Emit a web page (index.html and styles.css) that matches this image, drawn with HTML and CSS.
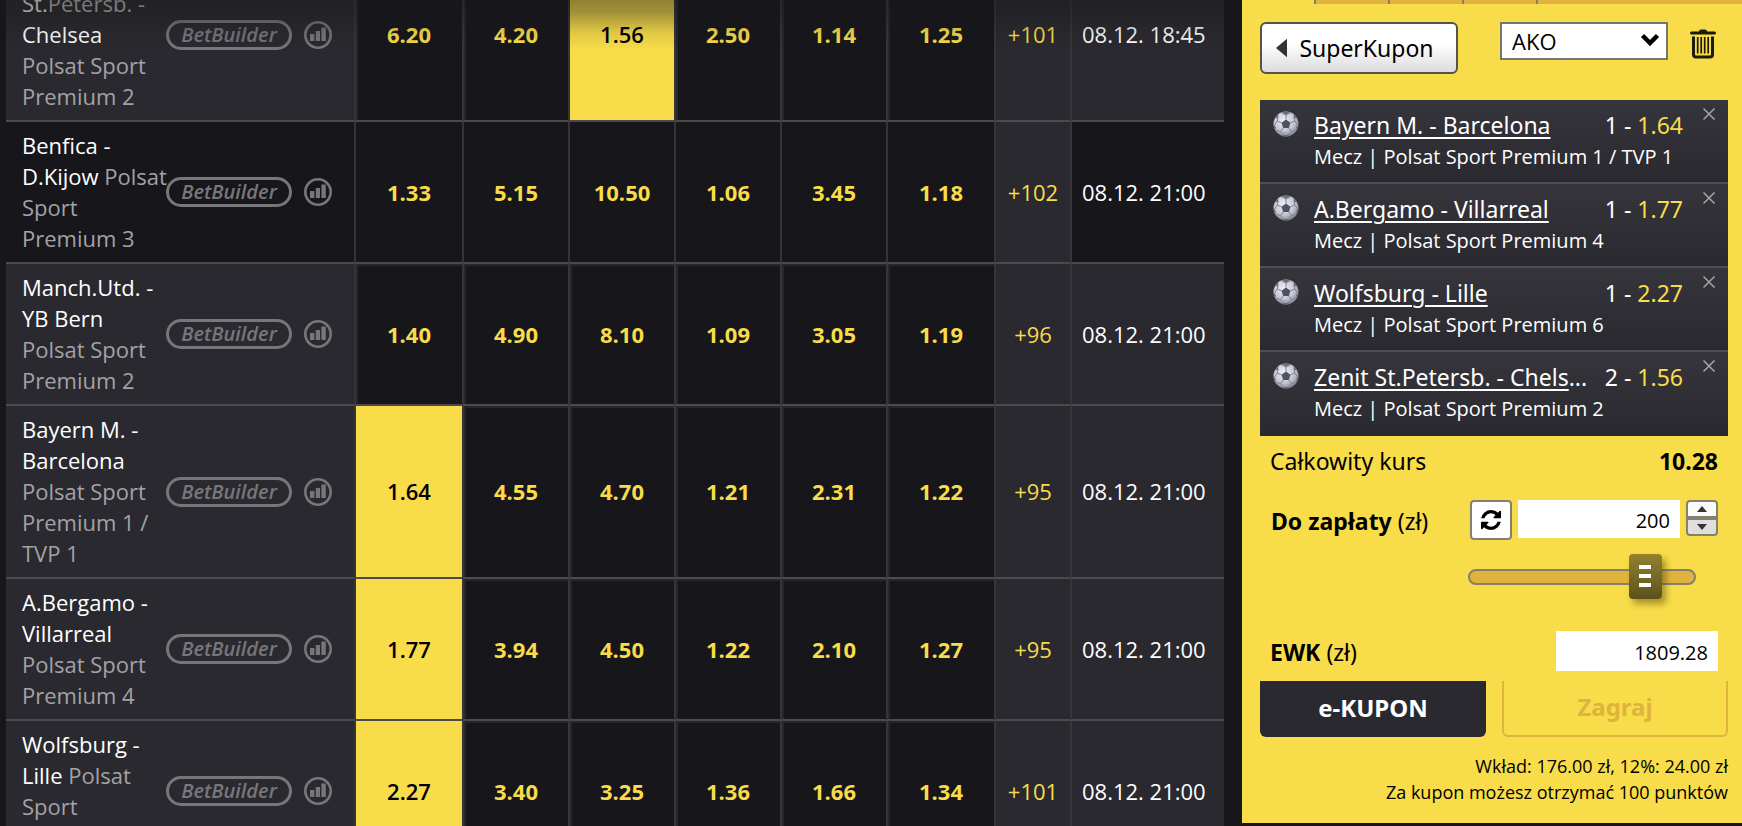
FILE: index.html
```
<!DOCTYPE html>
<html lang="pl">
<head>
<meta charset="utf-8">
<meta name="viewport" content="width=device-width, initial-scale=1">
<title>SuperKupon</title>
<link rel="stylesheet" href="styles.css">
</head>
<body>
<svg class="defs" aria-hidden="true">
  <symbol id="i-chart" viewBox="0 0 28 28">
    <circle cx="14" cy="14" r="12.700" fill="none" stroke="currentColor" stroke-width="2.600"/>
    <path d="M6 13h4.400v7H6zM11.800 10h4.200v10h-4.200zM17.400 6.500h4.400V20h-4.400z" fill="currentColor"/>
  </symbol>
  <symbol id="i-close" viewBox="0 0 14 14">
    <path d="M1.500 1.500l11 11M12.500 1.500l-11 11" fill="none" stroke="currentColor" stroke-width="1.500"/>
  </symbol>
  <symbol id="i-ball" viewBox="0 0 26 26">
    <defs><radialGradient id="ballfill" cx=".42" cy=".35" r=".65"><stop offset="0" stop-color="#eff0f8"/><stop offset=".65" stop-color="#c3c5d2"/><stop offset="1" stop-color="#858896"/></radialGradient></defs>
    <circle cx="13" cy="13" r="12.500" fill="url(#ballfill)"/>
    <path d="M13 8.500l4.500 3.200-1.700 5.200h-5.600l-1.700-5.200z" fill="#50535f"/>
    <path d="M13 8.500V4M17.500 11.700l4.300-1.500M15.800 16.900l2.700 3.800M10.200 16.900l-2.700 3.800M8.500 11.700L4.200 10.200M13 4L8.500 2M13 4l4.500-2M21.800 10.200l-1-4.500M21.800 10.200l3 4M18.500 20.700l4-1.500M18.500 20.700l-3.500 3.800M7.500 20.700l3.500 3.800M7.500 20.700l-4-1.500M4.200 10.200l1-4.500M4.200 10.200l-3 4" fill="none" stroke="#80838f" stroke-width="1"/>
    <path d="M9 1.200L13 3.600l4-2.400a12.500 12.500 0 0 0-8 0zM20.500 3.200l.7 3.800 2.700.3a12.500 12.500 0 0 0-3.400-4.100zM5.500 3.200L4.800 7l-2.700.3a12.500 12.500 0 0 1 3.400-4.100zM25.500 13l-2.200 3 .2 3.500a12.500 12.500 0 0 0 2-6.500zM.5 13l2.200 3-.2 3.500a12.500 12.500 0 0 1-2-6.500zM9.500 24.900l1.500-1h4l1.500 1a12.500 12.500 0 0 1-7 0z" fill="#666978"/>
  </symbol>
</svg>
<div class="page">
  <main class="offer">
    <table class="matches">
      <colgroup><col><col class="c-edge"><col class="c-odd" span="4"><col class="c-edge"><col class="c-more"><col class="c-date"></colgroup>
      <tbody>
        <tr>
          <th scope="row"><div class="event"><span class="name">Zenit <br>St.<span class="dim">Petersb. -</span> Chelsea <small>Polsat Sport Premium 2</small></span><button class="builder">BetBuilder</button><button class="stats" aria-label="Statystyki"><svg><use href="#i-chart"/></svg></button></div></th>
          <td>6.20</td><td>4.20</td><td class="on">1.56</td><td>2.50</td><td>1.14</td><td>1.25</td>
          <td class="more"><a href="#">+101</a></td><td class="date">08.12. 18:45</td>
        </tr>
        <tr class="plain">
          <th scope="row"><div class="event"><span class="name">Benfica - D.Kijow <small>Polsat Sport Premium 3</small></span><button class="builder">BetBuilder</button><button class="stats" aria-label="Statystyki"><svg><use href="#i-chart"/></svg></button></div></th>
          <td>1.33</td><td>5.15</td><td>10.50</td><td>1.06</td><td>3.45</td><td>1.18</td>
          <td class="more"><a href="#">+102</a></td><td class="date">08.12. 21:00</td>
        </tr>
        <tr>
          <th scope="row"><div class="event"><span class="name">Manch.Utd. - YB Bern <small>Polsat Sport Premium 2</small></span><button class="builder">BetBuilder</button><button class="stats" aria-label="Statystyki"><svg><use href="#i-chart"/></svg></button></div></th>
          <td>1.40</td><td>4.90</td><td>8.10</td><td>1.09</td><td>3.05</td><td>1.19</td>
          <td class="more"><a href="#">+96</a></td><td class="date">08.12. 21:00</td>
        </tr>
        <tr>
          <th scope="row"><div class="event"><span class="name">Bayern M. - Barcelona <small>Polsat Sport Premium 1 / TVP 1</small></span><button class="builder">BetBuilder</button><button class="stats" aria-label="Statystyki"><svg><use href="#i-chart"/></svg></button></div></th>
          <td class="on">1.64</td><td>4.55</td><td>4.70</td><td>1.21</td><td>2.31</td><td>1.22</td>
          <td class="more"><a href="#">+95</a></td><td class="date">08.12. 21:00</td>
        </tr>
        <tr>
          <th scope="row"><div class="event"><span class="name">A.Bergamo - Villarreal <small>Polsat Sport Premium 4</small></span><button class="builder">BetBuilder</button><button class="stats" aria-label="Statystyki"><svg><use href="#i-chart"/></svg></button></div></th>
          <td class="on">1.77</td><td>3.94</td><td>4.50</td><td>1.22</td><td>2.10</td><td>1.27</td>
          <td class="more"><a href="#">+95</a></td><td class="date">08.12. 21:00</td>
        </tr>
        <tr>
          <th scope="row"><div class="event"><span class="name">Wolfsburg - Lille <small>Polsat Sport Premium 6</small></span><button class="builder">BetBuilder</button><button class="stats" aria-label="Statystyki"><svg><use href="#i-chart"/></svg></button></div></th>
          <td class="on">2.27</td><td>3.40</td><td>3.25</td><td>1.36</td><td>1.66</td><td>1.34</td>
          <td class="more"><a href="#">+101</a></td><td class="date">08.12. 21:00</td>
        </tr>
      </tbody>
    </table>
  </main>

  <aside class="slip">
    <div class="tabs"><span></span><span></span><span></span><span></span></div>
    <div class="toolbar">
      <button class="super"><svg viewBox="0 0 12 20"><path d="M12 0v20L0 10z" fill="#333"/></svg>SuperKupon</button>
      <div class="mode">
        <select aria-label="Rodzaj kuponu"><option>AKO</option></select>
        <svg viewBox="0 0 20 14"><path d="M2.500 2.500L10 10l7.500-7.500" fill="none" stroke="#000" stroke-width="4.500"/></svg>
      </div>
      <button class="trash" aria-label="Usuń kupon">
        <svg viewBox="0 0 26 30"><path d="M9 2.500Q9 .5 11 .5h4q2 0 2 2h7.500q1.500 0 1.500 1.500t-1.500 1.500h-23Q0 5.500 0 4t1.500-1.500z" fill="#1c1a08"/><path d="M3.500 7.500v18q0 2.500 2.500 2.500h14q2.500 0 2.500-2.500v-18" fill="none" stroke="#1c1a08" stroke-width="3"/><path d="M7.700 8v16.500M11.200 8v16.500M14.700 8v16.500M18.200 8v16.500" fill="none" stroke="#1c1a08" stroke-width="1.700"/></svg>
      </button>
    </div>

    <ul class="bets">
      <li><svg class="ball"><use href="#i-ball"/></svg><a class="match" href="#">Bayern M. - Barcelona</a><span class="pick">1 - <b>1.64</b></span><p>Mecz | Polsat Sport Premium 1 / TVP 1</p><button class="close" aria-label="Usuń"><svg><use href="#i-close"/></svg></button></li>
      <li><svg class="ball"><use href="#i-ball"/></svg><a class="match" href="#">A.Bergamo - Villarreal</a><span class="pick">1 - <b>1.77</b></span><p>Mecz | Polsat Sport Premium 4</p><button class="close" aria-label="Usuń"><svg><use href="#i-close"/></svg></button></li>
      <li><svg class="ball"><use href="#i-ball"/></svg><a class="match" href="#">Wolfsburg - Lille</a><span class="pick">1 - <b>2.27</b></span><p>Mecz | Polsat Sport Premium 6</p><button class="close" aria-label="Usuń"><svg><use href="#i-close"/></svg></button></li>
      <li><svg class="ball"><use href="#i-ball"/></svg><span class="match"><a href="#">Zenit St.Petersb. - Chels</a>...</span><span class="pick">2 - <b>1.56</b></span><p>Mecz | Polsat Sport Premium 2</p><button class="close" aria-label="Usuń"><svg><use href="#i-close"/></svg></button></li>
    </ul>

    <div class="total"><span>Całkowity kurs</span><strong>10.28</strong></div>

    <div class="stake">
      <label for="stake"><strong>Do zapłaty</strong> (zł)</label>
      <button class="refresh" aria-label="Odśwież"><svg viewBox="0 0 1536 1536"><path d="M1511 928q0 5-1 7-64 268-268 434.500T764 1536q-146 0-282.500-55T238 1324l-129 129q-19 19-45 19t-45-19-19-45V960q0-26 19-45t45-19h448q26 0 45 19t19 45-19 45l-137 137q71 66 161 102t187 36q134 0 250-65t186-179q11-17 53-117 8-23 30-23h192q13 0 22.500 9.500t9.500 22.500zm25-800v448q0 26-19 45t-45 19h-448q-26 0-45-19t-19-45 19-45l138-138Q969 256 768 256q-134 0-250 65T332 500q-11 17-53 117-8 23-30 23H50q-13 0-22.500-9.500T18 608v-7q65-268 270-434.500T768 0q146 0 284 55.500T1297 212l130-129q19-19 45-19t45 19 19 45z"/></svg></button>
      <input id="stake" class="field" type="text" value="200">
      <div class="steps">
        <button aria-label="Więcej"><svg viewBox="0 0 10 6"><path d="M5 0l5 6H0z"/></svg></button>
        <button aria-label="Mniej"><svg viewBox="0 0 10 6"><path d="M5 6l5-6H0z"/></svg></button>
      </div>
    </div>
    <input class="slider" type="range" min="0" max="100" value="83" aria-label="Stawka">

    <div class="win"><label for="win"><strong>EWK</strong> (zł)</label><input id="win" class="field" type="text" value="1809.28"></div>

    <div class="actions"><button class="ekupon">e-KUPON</button><button class="play" disabled>Zagraj</button></div>
    <p class="note">Wkład: 176.00 zł, 12%: 24.00 zł<br>Za kupon możesz otrzymać 100 punktów</p>
  </aside>
</div>
</body>
</html>
```
FILE: styles.css
```
* { box-sizing: border-box; }

body {
  margin: 0;
  background: #17161b;
  color: #fff;
  font: 22px/31px "Open Sans", "Noto Sans", sans-serif;
}

button, input, select { font: inherit; color: inherit; margin: 0; }
button { padding: 0; border: 0; background: none; cursor: pointer; }
svg { display: block; }
p { margin: 0; }
.defs { position: absolute; width: 0; height: 0; }

.page {
  display: grid;
  grid-template-columns: minmax(0, 1fr) 500px;
  align-items: start;
  height: 100vh;
  overflow: hidden;
}

/* Offer table */
.offer { position: relative; padding: 0 18px 0 6px; }
.offer::before {
  content: "";
  position: absolute;
  inset: 0 0 auto;
  height: 50px;
  background: linear-gradient(rgba(24, 24, 24, .46), rgba(24, 24, 24, .38) 25%, rgba(24, 24, 24, .1) 66%, transparent);
  pointer-events: none;
}
.matches {
  width: 100%;
  margin-top: -51px;
  border-collapse: separate;
  border-spacing: 0;
  table-layout: fixed;
}
.c-odd { width: 106px; }
.c-edge { width: 108px; }
.c-more { width: 76px; }
.c-date { width: 154px; }
.matches th, .matches td {
  padding: 0;
  border-bottom: 2px solid #4b4a4f;
  text-align: center;
}
.matches th { background: #2a292f; text-align: left; font-weight: 400; }
.matches td {
  border-left: 2px solid #36353a;
  background: #17161b;
  box-shadow: inset 2px 2px #27262b;
  color: #f8dc4a;
  font-weight: 700;
}
.matches td.on { background: #f8dc4a; box-shadow: none; color: #000; font-weight: 600; }
.matches td.more, .matches td.date { background: #2a292f; box-shadow: none; font-weight: 400; }
.matches td.date { color: #fff; text-align: left; padding-left: 10px; }
.matches .plain th, .matches .plain td.date { background: #17161b; }
.matches .plain td { box-shadow: none; }
.more a { color: inherit; text-decoration: none; }

.event { display: flex; align-items: center; justify-content: space-between; padding: 8px 22px 8px 16px; }
.name { flex: none; width: 148px; margin-right: -4px; }
.name small { font-size: 22px; color: #a3a2a6; }
.name .dim { color: #c0c0c2; }
.builder {
  height: 30px;
  width: 126px;
  border: 3px solid #77767b;
  border-radius: 15px;
  color: #77767b;
  font-size: 20px;
  font-style: italic;
  font-weight: 600;
  line-height: 24px;
}
.stats { margin-left: 12px; color: #77767b; }
.stats svg { width: 28px; height: 28px; }

/* Coupon */
.slip { background: #f8dc4a; color: #000; padding: 0 14px 18px 18px; }
.super, .match, .pick, .total, .stake label, .win label, .actions button {
  font-family: "Noto Sans", "Open Sans", sans-serif;
  font-size: 23px;
}
.tabs {
  display: flex;
  height: 4px;
  margin: 0 -14px 18px 54px;
  background: #e0b33f;
}
.tabs span { width: 74px; border-left: 2px solid #8c7f5c; }

.toolbar { display: flex; align-items: flex-start; height: 78px; }
.super {
  display: flex;
  align-items: center;
  justify-content: center;
  gap: 12px;
  width: 198px;
  height: 52px;
  padding-right: 8px;
  border: 2px solid #55534a;
  border-radius: 6px;
  background: linear-gradient(#fff 40%, #dcdce0);
}
.super svg { width: 11px; height: 20px; }
.mode { position: relative; margin-left: auto; }
.mode select {
  appearance: none;
  width: 168px;
  height: 38px;
  padding: 0 10px;
  border: 2px solid #77756f;
  border-radius: 0;
  background: #fff;
  line-height: 32px;
}
.mode svg { position: absolute; right: 8px; top: 11px; width: 20px; height: 14px; pointer-events: none; }
.trash { margin: 7px 12px 0 22px; }
.trash svg { width: 26px; height: 30px; }

.bets { margin: 0; padding: 0; list-style: none; color: #fff; }
.bets li {
  display: grid;
  grid-template-columns: 26px minmax(0, 1fr) auto 30px;
  column-gap: 15px;
  align-content: start;
  height: 84px;
  padding: 10px 0 0 13px;
  border-bottom: 2px solid #4f4e53;
  background: linear-gradient(#36353b, #2a292f);
}
.bets li:last-child { border-bottom: 0; }
.bets p { grid-column: 2 / 4; grid-row: 2; font-size: 20px; line-height: 32px; }
.ball { width: 26px; height: 26px; margin-top: 1px; }
.match, .pick { line-height: 31px; white-space: nowrap; }
.match { color: inherit; text-underline-offset: 3px; text-decoration-thickness: 2px; }
.match a { color: inherit; }
.pick b { color: #f8dc4a; font-weight: 400; }
.close { grid-column: 4; grid-row: 1; align-self: start; justify-self: start; margin: -3px 0 0 4px; color: #a6a5a8; }
.close svg { width: 14px; height: 14px; }

.total { display: flex; justify-content: space-between; padding: 9px 10px 0; line-height: 32px; }

.stake { display: flex; align-items: flex-start; gap: 6px; padding: 23px 10px 0 11px; }
.stake label { margin-right: auto; padding-top: 4px; line-height: 34px; }
.refresh {
  display: grid;
  place-items: center;
  width: 42px;
  height: 40px;
  border: 2px solid #85806c;
  border-radius: 4px;
  background: #fff;
}
.refresh svg { width: 20px; height: 20px; }
.field {
  width: 162px;
  height: 38px;
  padding: 2px 10px 0;
  border: 0;
  background: #fff;
  text-align: right;
  font-size: 20px;
}
.steps { display: grid; width: 32px; height: 36px; }
.steps button {
  display: grid;
  place-items: center;
  border: 2px solid #85806c;
  border-radius: 4px 4px 0 0;
  background: #fafafa;
}
.steps button + button { border-radius: 0 0 4px 4px; background: #dedede; }
.steps svg { width: 10px; height: 6px; fill: #333; }

.slider {
  appearance: none;
  display: block;
  width: 228px;
  height: 46px;
  margin: 14px 32px 31px auto;
  background: none;
}
.slider::-webkit-slider-runnable-track {
  height: 16px;
  border: 2px solid #85806c;
  border-radius: 8px;
  background: #e0b33f;
}
.slider::-webkit-slider-thumb {
  appearance: none;
  width: 33px;
  height: 45px;
  margin-top: -17px;
  border-radius: 4px;
  background:
    linear-gradient(#fff, #fff) 50% 11px / 12px 4px no-repeat,
    linear-gradient(#fff, #fff) 50% 20px / 12px 4px no-repeat,
    linear-gradient(#fff, #fff) 50% 29px / 12px 4px no-repeat,
    linear-gradient(#93822f, #5c511d);
  box-shadow: 4px 5px 6px rgba(90, 75, 10, .5);
}

.win { display: flex; align-items: center; justify-content: space-between; padding: 0 10px; }
.win label { padding-top: 2px; }
.win .field { height: 40px; }

.actions { display: grid; grid-template-columns: 1fr 1fr; gap: 16px; padding-top: 10px; }
.actions button { height: 56px; padding-bottom: 4px; border-radius: 0 0 6px 6px; font-size: 24px; font-weight: 700; }
.ekupon { background: #2a292f; color: #fff; }
.play { border: 2px solid #e0b33f; border-top: 0; color: #e0b33f; }
.note { padding-top: 16px; text-align: right; font-size: 18px; line-height: 26px; }
```
